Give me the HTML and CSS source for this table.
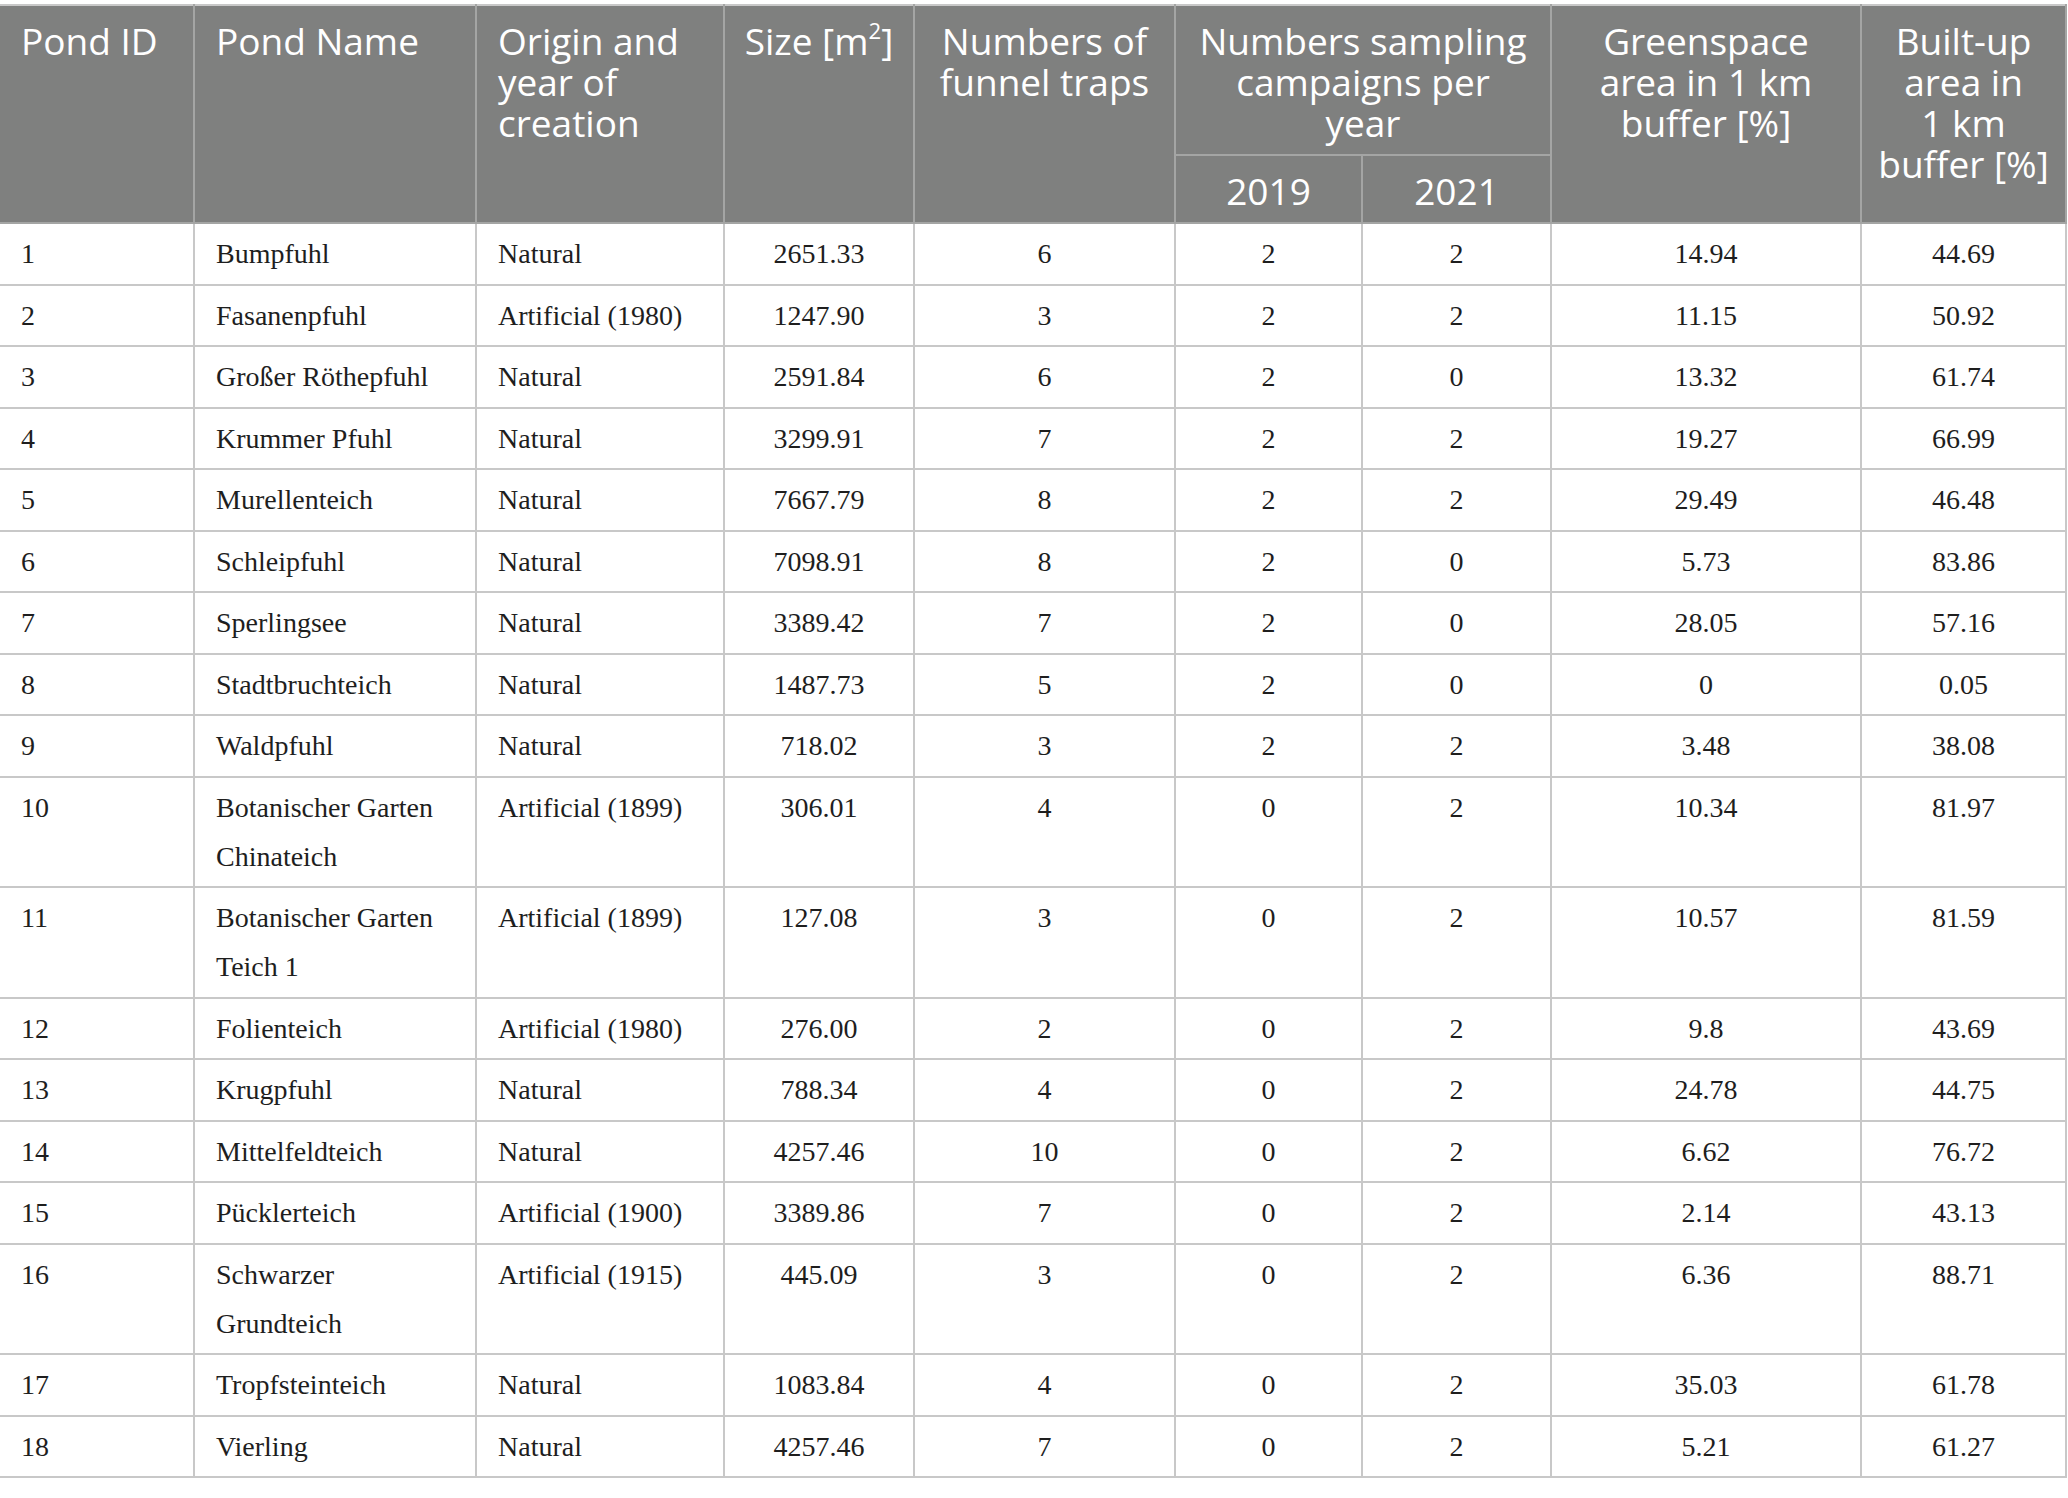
FILE: index.html
```html
<!DOCTYPE html>
<html lang="en">
<head>
  <meta charset="UTF-8" />
  <title>Pond characteristics</title>
  <link rel="stylesheet" href="styles.css">
</head>
<body>
  <table class="ponds">
    <colgroup>
      <col style="width:194px">
      <col style="width:282px">
      <col style="width:248px">
      <col style="width:190px">
      <col style="width:261px">
      <col style="width:187px">
      <col style="width:189px">
      <col style="width:310px">
      <col style="width:205px">
    </colgroup>
    <thead>
      <tr>
        <th rowspan="2" class="left">Pond ID</th>
        <th rowspan="2" class="left">Pond Name</th>
        <th rowspan="2" class="left">Origin and<br>year of<br>creation</th>
        <th rowspan="2">Size [m<sup>2</sup>]</th>
        <th rowspan="2">Numbers of<br>funnel traps</th>
        <th colspan="2">Numbers sampling<br>campaigns per<br>year</th>
        <th rowspan="2">Greenspace<br>area in 1 km<br>buffer [%]</th>
        <th rowspan="2">Built-up<br>area in<br>1 km<br>buffer [%]</th>
      </tr>
      <tr>
        <th>2019</th>
        <th>2021</th>
      </tr>
    </thead>
    <tbody>
      <tr><td>1</td><td>Bumpfuhl</td><td>Natural</td><td>2651.33</td><td>6</td><td>2</td><td>2</td><td>14.94</td><td>44.69</td></tr>
      <tr><td>2</td><td>Fasanenpfuhl</td><td>Artificial (1980)</td><td>1247.90</td><td>3</td><td>2</td><td>2</td><td>11.15</td><td>50.92</td></tr>
      <tr><td>3</td><td>Großer Röthepfuhl</td><td>Natural</td><td>2591.84</td><td>6</td><td>2</td><td>0</td><td>13.32</td><td>61.74</td></tr>
      <tr><td>4</td><td>Krummer Pfuhl</td><td>Natural</td><td>3299.91</td><td>7</td><td>2</td><td>2</td><td>19.27</td><td>66.99</td></tr>
      <tr><td>5</td><td>Murellenteich</td><td>Natural</td><td>7667.79</td><td>8</td><td>2</td><td>2</td><td>29.49</td><td>46.48</td></tr>
      <tr><td>6</td><td>Schleipfuhl</td><td>Natural</td><td>7098.91</td><td>8</td><td>2</td><td>0</td><td>5.73</td><td>83.86</td></tr>
      <tr><td>7</td><td>Sperlingsee</td><td>Natural</td><td>3389.42</td><td>7</td><td>2</td><td>0</td><td>28.05</td><td>57.16</td></tr>
      <tr><td>8</td><td>Stadtbruchteich</td><td>Natural</td><td>1487.73</td><td>5</td><td>2</td><td>0</td><td>0</td><td>0.05</td></tr>
      <tr><td>9</td><td>Waldpfuhl</td><td>Natural</td><td>718.02</td><td>3</td><td>2</td><td>2</td><td>3.48</td><td>38.08</td></tr>
      <tr><td>10</td><td>Botanischer Garten Chinateich</td><td>Artificial (1899)</td><td>306.01</td><td>4</td><td>0</td><td>2</td><td>10.34</td><td>81.97</td></tr>
      <tr><td>11</td><td>Botanischer Garten Teich 1</td><td>Artificial (1899)</td><td>127.08</td><td>3</td><td>0</td><td>2</td><td>10.57</td><td>81.59</td></tr>
      <tr><td>12</td><td>Folienteich</td><td>Artificial (1980)</td><td>276.00</td><td>2</td><td>0</td><td>2</td><td>9.8</td><td>43.69</td></tr>
      <tr><td>13</td><td>Krugpfuhl</td><td>Natural</td><td>788.34</td><td>4</td><td>0</td><td>2</td><td>24.78</td><td>44.75</td></tr>
      <tr><td>14</td><td>Mittelfeldteich</td><td>Natural</td><td>4257.46</td><td>10</td><td>0</td><td>2</td><td>6.62</td><td>76.72</td></tr>
      <tr><td>15</td><td>Pücklerteich</td><td>Artificial (1900)</td><td>3389.86</td><td>7</td><td>0</td><td>2</td><td>2.14</td><td>43.13</td></tr>
      <tr><td>16</td><td>Schwarzer Grundteich</td><td>Artificial (1915)</td><td>445.09</td><td>3</td><td>0</td><td>2</td><td>6.36</td><td>88.71</td></tr>
      <tr><td>17</td><td>Tropfsteinteich</td><td>Natural</td><td>1083.84</td><td>4</td><td>0</td><td>2</td><td>35.03</td><td>61.78</td></tr>
      <tr><td>18</td><td>Vierling</td><td>Natural</td><td>4257.46</td><td>7</td><td>0</td><td>2</td><td>5.21</td><td>61.27</td></tr>
    </tbody>
  </table>
</body>
</html>
```

FILE: styles.css
```css
body {
  margin: 0;
  padding-top: 4px;
  background: #fff;
}
.ponds {
  width: 2066px;
  table-layout: fixed;
  border-collapse: collapse;
  font-family: "Liberation Serif", "Times New Roman", serif;
  color: #1e1e1e;
}
.ponds th {
  background: #7f807f;
  color: #fff;
  font-family: "Open Sans", "Noto Sans", sans-serif;
  font-weight: 400;
  font-size: 37px;
  line-height: 41px;
  white-space: nowrap;
  text-align: center;
  vertical-align: top;
  padding: 14px 8px 11px;
  border: 2px solid #a4a5a4;
  border-top-color: #c8c8c8;
}
.ponds th.left {
  text-align: left;
  padding-left: 21px;
}
.ponds th sup {
  font-size: 0.6em;
  line-height: 0;
  vertical-align: 0.7em;
}
.ponds td {
  font-size: 28px;
  line-height: 49px;
  padding: 5px 12px 5.5px;
  text-align: center;
  vertical-align: top;
  border: 2px solid #c8c8c8;
}
.ponds td:nth-child(-n+3) {
  text-align: left;
  padding-left: 21px;
}
.ponds tr > :first-child {
  border-left: none;
}
```
